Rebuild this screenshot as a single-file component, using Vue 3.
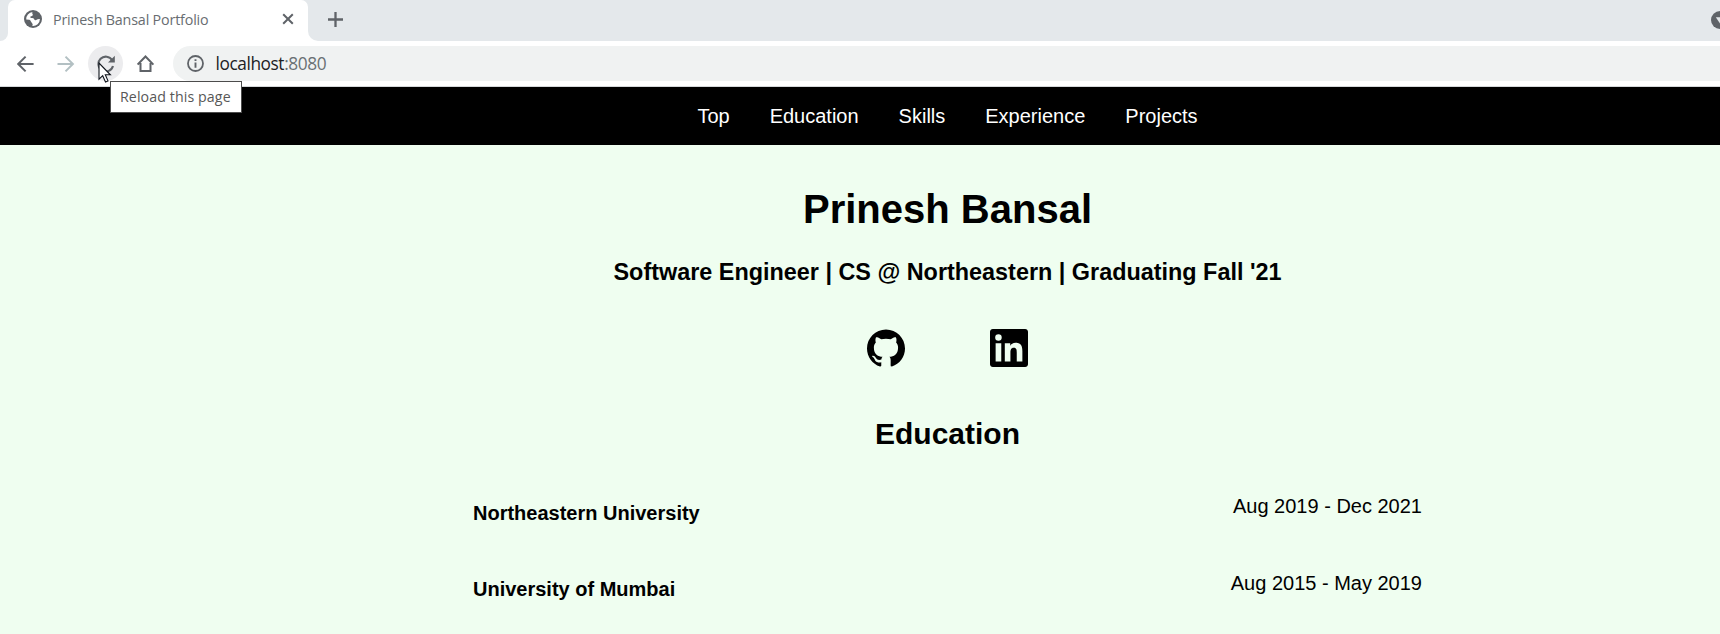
<script setup>
const links = ['Top', 'Education', 'Skills', 'Experience', 'Projects']
const schools = [
  { name: 'Northeastern University', dates: 'Aug 2019 - Dec 2021' },
  { name: 'University of Mumbai', dates: 'Aug 2015 - May 2019' },
]
</script>

<template>
  <div class="window">
    <header class="browser">
      <div class="tabstrip">
        <div class="prev-tab"></div>
        <div class="tab-slot">
          <div class="tab">
            <svg class="globe" width="18" height="18" viewBox="0 0 18 18">
              <circle cx="9" cy="9" r="9" fill="#5f6368" />
              <path d="M8.7 2.1 C7.2 3.4 9.5 4.3 8.6 5.4 C7.9 6.3 6.5 5.8 6.2 6.9 C5.9 8 8 7.8 9.2 8.2 C10.8 8.7 9.9 10.3 11.5 10.2 C12.9 10.1 13.2 8.6 15.9 9 A6.9 6.9 0 0 1 8.2 15.9 C9 14.7 8.8 13.7 7.9 12.9 C6.9 12.1 6.8 10.2 5.4 9.8 L2.2 9.5 A6.9 6.9 0 0 1 8.7 2.1 Z" fill="#fff" />
              <path d="M10.8 2.4 A6.8 6.8 0 0 1 15.4 6.6 L12.8 7.4 L10.2 6.4 L12.2 5 Z" fill="#5f6368" />
            </svg>
            <span class="tab-title">Prinesh Bansal Portfolio</span>
            <svg class="close" width="12" height="12" viewBox="0 0 12 12">
              <path d="M1.2 1.2 10.8 10.8M10.8 1.2 1.2 10.8" stroke="#5f6368" stroke-width="2" />
            </svg>
          </div>
        </div>
        <div class="after-tab">
          <svg class="plus" width="15" height="15" viewBox="0 0 15 15">
            <path d="M7.5 0V15M0 7.5H15" stroke="#5f6368" stroke-width="2.3" />
          </svg>
          <svg class="chevron" width="18" height="18" viewBox="0 0 18 18">
            <circle cx="9" cy="9" r="9" fill="#5f6368" />
            <path d="M4.8 6.3H13.2L9 12.5Z" fill="#e4e8eb" />
          </svg>
        </div>
      </div>
      <div class="toolbar">
        <span class="tool">
          <svg width="18" height="18" viewBox="0 0 18 18" fill="none" stroke="#5f6368" stroke-width="2">
            <path d="M16.6 9H1.6M8.6 1.6 1.2 9 8.6 16.4" />
          </svg>
        </span>
        <span class="tool">
          <svg width="18" height="18" viewBox="0 0 18 18" fill="none" stroke="#b3c0c3" stroke-width="2">
            <path d="M.5 9H15.5M8.5 1.6 15.9 9 8.5 16.4" />
          </svg>
        </span>
        <span class="tool hover">
          <svg width="18" height="18" viewBox="0 0 18 18">
            <path d="M15.2 5.2A7.4 7.4 0 1 0 16 11" fill="none" stroke="#5f6368" stroke-width="2.1" />
            <path d="M17.8 .8V7.6H11Z" fill="#5f6368" />
          </svg>
          <svg class="cursor" width="15" height="22" viewBox="0 0 15 22">
            <path d="M1 1V17.2L4.7 13.7 7.5 20 10 18.9 7.3 12.8H12.4Z" fill="#fff" stroke="#10141c" stroke-width="1.1" />
          </svg>
          <span class="tooltip">Reload this page</span>
        </span>
        <span class="tool">
          <svg width="18" height="18" viewBox="0 0 18 18" fill="none" stroke="#5f6368" stroke-width="2">
            <path d="M.6 9.6 8.5 1.5 16.4 9.6M3.5 8V16H13.5V8" />
          </svg>
        </span>
        <div class="address">
          <svg width="17" height="17" viewBox="0 0 17 17">
            <circle cx="8.5" cy="8.5" r="7.5" fill="none" stroke="#5f6368" stroke-width="1.8" />
            <path d="M8.5 4.2V6M8.5 7.5V12.8" stroke="#5f6368" stroke-width="1.9" />
          </svg>
          <span class="url">localhost<span class="port">:8080</span></span>
        </div>
      </div>
    </header>

    <div class="page">
      <nav class="nav">
        <a v-for="link in links" :key="link">{{ link }}</a>
      </nav>
      <main>
        <h1>Prinesh Bansal</h1>
        <h3>Software Engineer | CS @ Northeastern | Graduating Fall '21</h3>
        <div class="social">
          <svg width="38" height="38" viewBox="0 0 24 24">
            <path d="M12 .297c-6.63 0-12 5.373-12 12 0 5.303 3.438 9.8 8.205 11.385.6.113.82-.258.82-.577 0-.285-.01-1.04-.015-2.04-3.338.724-4.042-1.61-4.042-1.61C4.422 18.07 3.633 17.7 3.633 17.7c-1.087-.744.084-.729.084-.729 1.205.084 1.838 1.236 1.838 1.236 1.07 1.835 2.809 1.305 3.495.998.108-.776.417-1.305.76-1.605-2.665-.3-5.466-1.332-5.466-5.93 0-1.31.465-2.38 1.235-3.22-.135-.303-.54-1.523.105-3.176 0 0 1.005-.322 3.3 1.23.96-.267 1.98-.399 3-.405 1.02.006 2.04.138 3 .405 2.28-1.552 3.285-1.23 3.285-1.23.645 1.653.24 2.873.12 3.176.765.84 1.23 1.91 1.23 3.22 0 4.61-2.805 5.625-5.475 5.92.42.36.81 1.096.81 2.22 0 1.606-.015 2.896-.015 3.286 0 .315.21.69.825.57C20.565 22.092 24 17.592 24 12.297c0-6.627-5.373-12-12-12" />
          </svg>
          <svg width="38" height="38" viewBox="0 0 24 24">
            <path d="M20.447 20.452h-3.554v-5.569c0-1.328-.027-3.037-1.852-3.037-1.853 0-2.136 1.445-2.136 2.939v5.667H9.351V9h3.414v1.561h.046c.477-.9 1.637-1.85 3.37-1.85 3.601 0 4.267 2.37 4.267 5.455v6.286zM5.337 7.433a2.062 2.062 0 0 1-2.063-2.065 2.064 2.064 0 1 1 2.063 2.065zm1.782 13.019H3.555V9h3.564v11.452zM22.225 0H1.771C.792 0 0 .774 0 1.729v20.542C0 23.227.792 24 1.771 24h20.451C23.2 24 24 23.227 24 22.271V1.729C24 .774 23.2 0 22.222 0h.003z" />
          </svg>
        </div>
        <h2>Education</h2>
        <section class="schools">
          <div v-for="s in schools" :key="s.name" class="school">
            <h4>{{ s.name }}</h4>
            <span class="dates">{{ s.dates }}</span>
          </div>
        </section>
      </main>
    </div>
  </div>
</template>

<style>
body {
  margin: 0;
}
</style>

<style scoped>
.window {
  width: 1720px;
  height: 634px;
  overflow: hidden;
  background: #effef0;
  font-family: "Liberation Sans", Arial, sans-serif;
  color: #000;
}
.browser {
  position: relative;
  z-index: 1;
  height: 86px;
  background: #fff;
  border-bottom: 1px solid #d5d8da;
  font-family: "Open Sans", "Noto Sans", sans-serif;
}
.tabstrip {
  display: flex;
  height: 41px;
  background: #fff;
}
.prev-tab {
  width: 8px;
  background: #e4e8eb;
  border-bottom-right-radius: 8px;
}
.tab-slot {
  width: 300px;
  background: linear-gradient(#e4e8eb 12px, #fff 12px);
}
.tab {
  display: flex;
  align-items: center;
  box-sizing: border-box;
  height: 38px;
  padding: 0 14px 0 16px;
  background: #fff;
  border-radius: 7px 7px 0 0;
}
.tab-title {
  margin-left: 11px;
  font-size: 14.3px;
  letter-spacing: -0.17px;
  color: #686d71;
  white-space: nowrap;
}
.close {
  margin-left: auto;
}
.after-tab {
  flex: 1;
  display: flex;
  align-items: flex-start;
  background: #e4e8eb;
  border-bottom-left-radius: 10px;
}
.plus {
  margin: 12px 0 0 20px;
}
.chevron {
  flex: none;
  margin: 11px -9px 0 auto;
}
.toolbar {
  display: flex;
  align-items: center;
  height: 45px;
  padding-left: 8px;
}
.tool {
  position: relative;
  display: flex;
  align-items: center;
  justify-content: center;
  width: 35px;
  height: 35px;
  margin-right: 5px;
  border-radius: 50%;
}
.hover {
  background: #ececee;
}
.cursor {
  position: absolute;
  left: 10px;
  top: 16px;
}
.tooltip {
  position: absolute;
  left: 22px;
  top: 35px;
  box-sizing: border-box;
  width: 132px;
  height: 32px;
  padding-left: 9px;
  border: 1px solid #4c4c4c;
  background: #fff;
  color: #575757;
  font-size: 14.2px;
  letter-spacing: 0.1px;
  line-height: 30px;
  white-space: nowrap;
}
.address {
  flex: 1;
  display: flex;
  align-items: center;
  height: 35px;
  margin-left: 5px;
  padding-left: 14px;
  border-radius: 18px 0 0 18px;
  background: #f0f2f2;
}
.url {
  margin-left: 11.5px;
  font-size: 17.3px;
  letter-spacing: -0.42px;
  color: #202124;
}
.port {
  color: #6a7074;
}
.page {
  width: 1895px;
}
.nav {
  display: flex;
  justify-content: center;
  gap: 40px;
  height: 58px;
  background: #000;
  color: #fff;
  font-size: 20px;
  line-height: 58px;
}
main {
  display: flex;
  flex-direction: column;
  align-items: center;
}
h1,
h2,
h3,
h4 {
  margin: 0;
  font-weight: bold;
  white-space: nowrap;
}
h1 {
  margin-top: 41px;
  font-size: 40px;
  line-height: 46px;
}
h3 {
  margin-top: 26px;
  font-size: 23.4px;
  line-height: 28px;
}
.social {
  display: flex;
  gap: 85px;
  margin-top: 43px;
}
h2 {
  margin-top: 50px;
  font-size: 30px;
  line-height: 34px;
}
.schools {
  width: 949px;
  margin-top: 43px;
}
.school {
  display: flex;
  justify-content: space-between;
  height: 77px;
  font-size: 20px;
  line-height: 24px;
}
h4 {
  margin-top: 7px;
  font-size: 20px;
}
.school:last-child h4 {
  margin-top: 6px;
}
</style>
